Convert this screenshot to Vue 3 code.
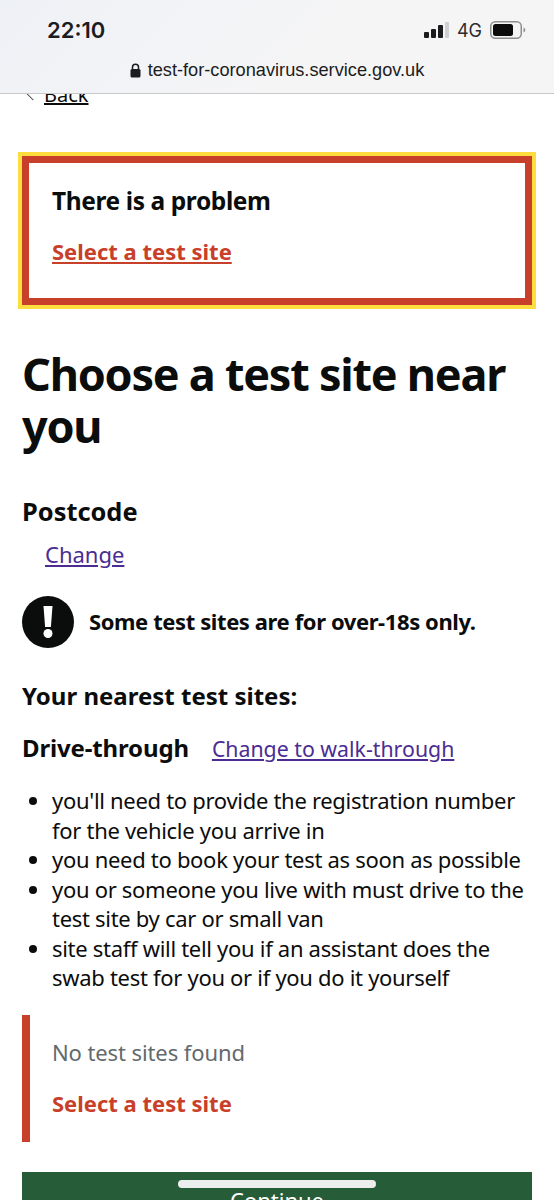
<template>
  <div class="phone">
    <header class="browser-bar">
      <div class="status-row">
        <span class="time">22:10</span>
        <div class="status-icons">
          <svg class="signal" width="25" height="16" viewBox="0 0 25 16">
            <rect x="0" y="10" width="5" height="6" rx="1" fill="#1c1c1e" />
            <rect x="7" y="7" width="5" height="9" rx="1" fill="#1c1c1e" />
            <rect x="14" y="3" width="5" height="13" rx="1" fill="#1c1c1e" />
            <rect x="21" y="0" width="4" height="16" rx="1" fill="#d0d0d2" />
          </svg>
          <span class="network">4G</span>
          <svg class="battery" width="36" height="18" viewBox="0 0 36 18">
            <rect x="0.75" y="0.75" width="30.5" height="16.5" rx="4.5" fill="none" stroke="#8e8e90" stroke-width="1.5" />
            <rect x="3" y="3" width="20" height="12" rx="2.5" fill="#0b0b0b" />
            <path d="M33.5 6.5c1.2.4 1.8 1.3 1.8 2.5s-.6 2.1-1.8 2.5z" fill="#8e8e90" />
          </svg>
        </div>
      </div>
      <div class="url-row">
        <svg width="11" height="15" viewBox="0 0 11 15">
          <path d="M2.5 6.5V4.2a3 3 0 0 1 6 0v2.3" fill="none" stroke="#1c1c1e" stroke-width="1.5" />
          <rect x="0.5" y="6" width="10" height="8.5" rx="1.5" fill="#1c1c1e" />
        </svg>
        <span>test-for-coronavirus.service.gov.uk</span>
      </div>
    </header>

    <main class="page">
      <a class="back-link" href="#">Back</a>

      <section class="error-summary">
        <h2>There is a problem</h2>
        <a href="#">Select a test site</a>
      </section>

      <h1>Choose a test site near you</h1>

      <h3 class="postcode">Postcode</h3>
      <a class="change-link" href="#">Change</a>

      <div class="warning">
        <svg class="warning-icon" width="52" height="52" viewBox="0 0 52 52">
          <circle cx="26" cy="26" r="26" fill="#0b0c0c" />
          <path d="M21.5 10h9l-1.6 21h-5.8z" fill="#fff" />
          <circle cx="26" cy="37.5" r="4.5" fill="#fff" />
        </svg>
        <strong>Some test sites are for over-18s only.</strong>
      </div>

      <h3 class="nearest">Your nearest test sites:</h3>

      <div class="mode-row">
        <h3>Drive-through</h3>
        <a href="#">Change to walk-through</a>
      </div>

      <ul>
        <li v-for="item in notes" :key="item">{{ item }}</li>
      </ul>

      <div class="form-error">
        <p>No test sites found</p>
        <strong>Select a test site</strong>
      </div>

      <button class="continue">Continue</button>
    </main>

    <div class="home-indicator"></div>
  </div>
</template>

<script setup>
const notes = [
  "you'll need to provide the registration number for the vehicle you arrive in",
  'you need to book your test as soon as possible',
  'you or someone you live with must drive to the test site by car or small van',
  'site staff will tell you if an assistant does the swab test for you or if you do it yourself',
]
</script>

<style>
html,
body {
  margin: 0;
  background: #fff;
}
</style>

<style scoped>
.phone {
  position: relative;
  width: 554px;
  height: 1200px;
  overflow: hidden;
  background: #fff;
  font-family: "Noto Sans", sans-serif;
  color: #0b0c0c;
}

.browser-bar {
  position: relative;
  z-index: 2;
  box-sizing: border-box;
  height: 94px;
  padding: 16px 47px 0;
  border-bottom: 1px solid #c9c9c9;
  background: linear-gradient(135deg, #eef1f6, #f5f5f6 55%);
  font-family: Inter, sans-serif;
}

.status-row {
  display: flex;
  justify-content: space-between;
  align-items: center;
  height: 28px;
}

.time {
  font-size: 22px;
  font-weight: 600;
  color: #1c1c1e;
}

.status-icons {
  display: flex;
  align-items: center;
  gap: 8px;
  margin-right: -19px;
}

.network {
  font-size: 18px;
  color: #2c2c2e;
}

.url-row {
  display: flex;
  justify-content: center;
  align-items: center;
  gap: 7px;
  margin-top: 16px;
  font-family: "Liberation Sans", sans-serif;
  font-size: 18.2px;
  color: #1c1c1e;
}

.page {
  padding: 0 22px;
}

.back-link {
  position: relative;
  display: block;
  margin-top: -11px;
  margin-left: 22px;
  height: 24px;
  font-size: 20px;
  line-height: 24px;
  color: #0b0c0c;
}

.back-link::before {
  content: "";
  position: absolute;
  left: -17px;
  top: 3px;
  width: 11px;
  height: 11px;
  border-left: 1.5px solid #555;
  border-bottom: 1.5px solid #555;
  transform: rotate(45deg);
}

.error-summary {
  box-sizing: border-box;
  height: 149px;
  margin-top: 49px;
  padding: 23px 23px 0;
  border: 7px solid #c8402a;
  box-shadow: 0 0 0 4px #fedd3e;
}

.error-summary h2 {
  margin: 0 0 20px;
  font-size: 24.5px;
  line-height: 30px;
  font-weight: 700;
  letter-spacing: -0.4px;
}

.error-summary a {
  font-size: 22px;
  line-height: 30px;
  font-weight: 700;
  color: #c8402a;
}

h1 {
  margin: 43px 0 0;
  font-size: 45px;
  line-height: 52px;
  font-weight: 700;
  letter-spacing: -1.25px;
}

h3 {
  margin: 0;
  font-size: 24px;
  line-height: 30px;
  font-weight: 700;
}

.postcode {
  margin-top: 44px;
  font-size: 25.4px;
}

.change-link {
  display: block;
  margin: 13px 0 0 23px;
  font-size: 22px;
  line-height: 30px;
  color: #4c2c92;
}

.warning {
  display: flex;
  align-items: center;
  gap: 15px;
  margin-top: 27px;
  font-size: 22px;
  letter-spacing: -0.4px;
}

.warning strong {
  margin-top: -2px;
}

.warning-icon {
  flex: none;
}

.nearest {
  margin-top: 33px;
}

.mode-row {
  display: flex;
  align-items: center;
  gap: 23px;
  margin-top: 22px;
}

.mode-row h3 {
  letter-spacing: -0.15px;
}

.mode-row a {
  font-size: 21.3px;
  color: #4c2c92;
}

ul {
  margin: 23px 0 0;
  padding: 0 0 0 30px;
  font-size: 22px;
  line-height: 29.5px;
  letter-spacing: -0.3px;
}

.form-error {
  box-sizing: border-box;
  height: 127px;
  margin-top: 22.5px;
  padding: 22px 0 0 22px;
  border-left: 8px solid #c8402a;
}

.form-error p {
  margin: 0 0 21px;
  font-size: 22px;
  line-height: 30px;
  color: #626a6e;
  letter-spacing: -0.1px;
}

.form-error strong {
  display: block;
  font-size: 22px;
  line-height: 30px;
  color: #c8402a;
}

.continue {
  display: block;
  width: 100%;
  height: 56px;
  margin-top: 30px;
  padding: 0;
  border: 0;
  background: #275c38;
  color: #fff;
  font-family: inherit;
  font-size: 22px;
  text-align: center;
}

.home-indicator {
  position: absolute;
  left: 178px;
  top: 1180px;
  width: 198px;
  height: 8px;
  border-radius: 4px;
  background: #eceeed;
}
</style>
